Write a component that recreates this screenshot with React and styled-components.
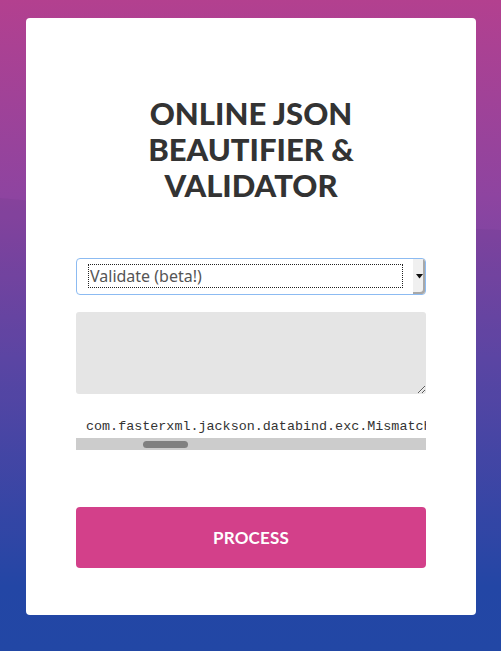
import React from 'react';
import styled, { createGlobalStyle } from 'styled-components';

const GlobalStyle = createGlobalStyle`
  html, body {
    margin: 0;
    padding: 0;
  }
  body {
    font-family: 'Lato', 'Liberation Sans', sans-serif;
  }
`;

const Page = styled.div`
  position: relative;
  min-height: 651px;
  box-sizing: border-box;
  padding: 18px 25px 36px 26px;
  background: linear-gradient(180deg, #b3408f 0%, #8e44a0 30%, #5f48a8 55%, #2449ab 90%, #234aab 100%);
  overflow: hidden;
`;

const Wave = styled.svg`
  position: absolute;
  left: 0;
  top: 190px;
  width: 501px;
  height: 461px;
  pointer-events: none;
`;

const Card = styled.div`
  position: relative;
  background: #fff;
  border-radius: 4px;
  padding: 77px 50px 47px;
  display: flex;
  flex-direction: column;
`;

const Title = styled.h1`
  margin: 0 0 55px;
  font-family: 'Lato', sans-serif;
  font-weight: 900;
  font-size: 31px;
  line-height: 36px;
  color: #333;
  text-align: center;
  padding: 0 40px;
`;

const Select = styled.div`
  display: flex;
  align-items: stretch;
  height: 37px;
  box-sizing: border-box;
  border: 1px solid #8cbbf2;
  border-radius: 4px;
  padding: 0 0 0 12px;
  background: #fff;
  margin-bottom: 17px;
`;

const SelectValue = styled.div`
  flex: 1;
  display: flex;
  align-items: center;
  margin: 6px 11px 7px 0;
  padding-left: 1px;
  outline: 1px dotted #222;
  font-family: 'Noto Sans', 'Open Sans', sans-serif;
  font-size: 16px;
  color: #555;
`;

const SelectArrow = styled.div`
  width: 12px;
  display: flex;
  align-items: center;
  justify-content: center;
  background: #f0f0f0;
  border-radius: 0 3px 3px 0;
  box-shadow: inset -2px -2px 0 #a8a8a8;
`;

const Input = styled.textarea`
  display: block;
  width: 100%;
  height: 82px;
  box-sizing: border-box;
  border: none;
  border-radius: 3px;
  background: #e5e5e5;
  resize: vertical;
  margin: 0 0 22px;
  padding: 8px;
  font-family: 'Liberation Mono', monospace;
`;

const Output = styled.div`
  display: flex;
  flex-direction: column;
  margin-bottom: 57px;
`;

const OutputText = styled.pre`
  margin: 0;
  padding: 3px 0 3px 10px;
  overflow: hidden;
  white-space: pre;
  font-family: 'Liberation Mono', 'DejaVu Sans Mono', monospace;
  font-size: 13.4px;
  line-height: 16px;
  color: #333;
`;

const Track = styled.div`
  height: 12px;
  background: #cccccc;
  display: flex;
  align-items: center;
  padding-left: 67px;
`;

const Thumb = styled.div`
  width: 45px;
  height: 7px;
  border-radius: 4px;
  background: #808080;
`;

const Button = styled.button`
  height: 61px;
  border: none;
  border-radius: 4px;
  background: #d3408a;
  color: #fff;
  font-family: 'Lato', sans-serif;
  font-weight: 700;
  font-size: 17px;
  letter-spacing: 0.2px;
  cursor: pointer;
`;

export default function App() {
  return (
    <>
      <GlobalStyle />
      <Page>
        <Wave viewBox="0 0 501 461" preserveAspectRatio="none">
          <path d="M0 8 C 60 14, 200 24, 501 40 L501 461 L0 461 Z" fill="rgba(40,30,90,0.06)" />
        </Wave>
        <Card>
          <Title>ONLINE JSON BEAUTIFIER &amp; VALIDATOR</Title>
          <Select>
            <SelectValue>Validate (beta!)</SelectValue>
            <SelectArrow>
              <svg width="7" height="5" viewBox="0 0 7 5">
                <path d="M0 0 H7 L3.5 4.5 Z" fill="#111" />
              </svg>
            </SelectArrow>
          </Select>
          <Input defaultValue="" />
          <Output>
            <OutputText>com.fasterxml.jackson.databind.exc.MismatchedInputException</OutputText>
            <Track>
              <Thumb />
            </Track>
          </Output>
          <Button>PROCESS</Button>
        </Card>
      </Page>
    </>
  );
}
